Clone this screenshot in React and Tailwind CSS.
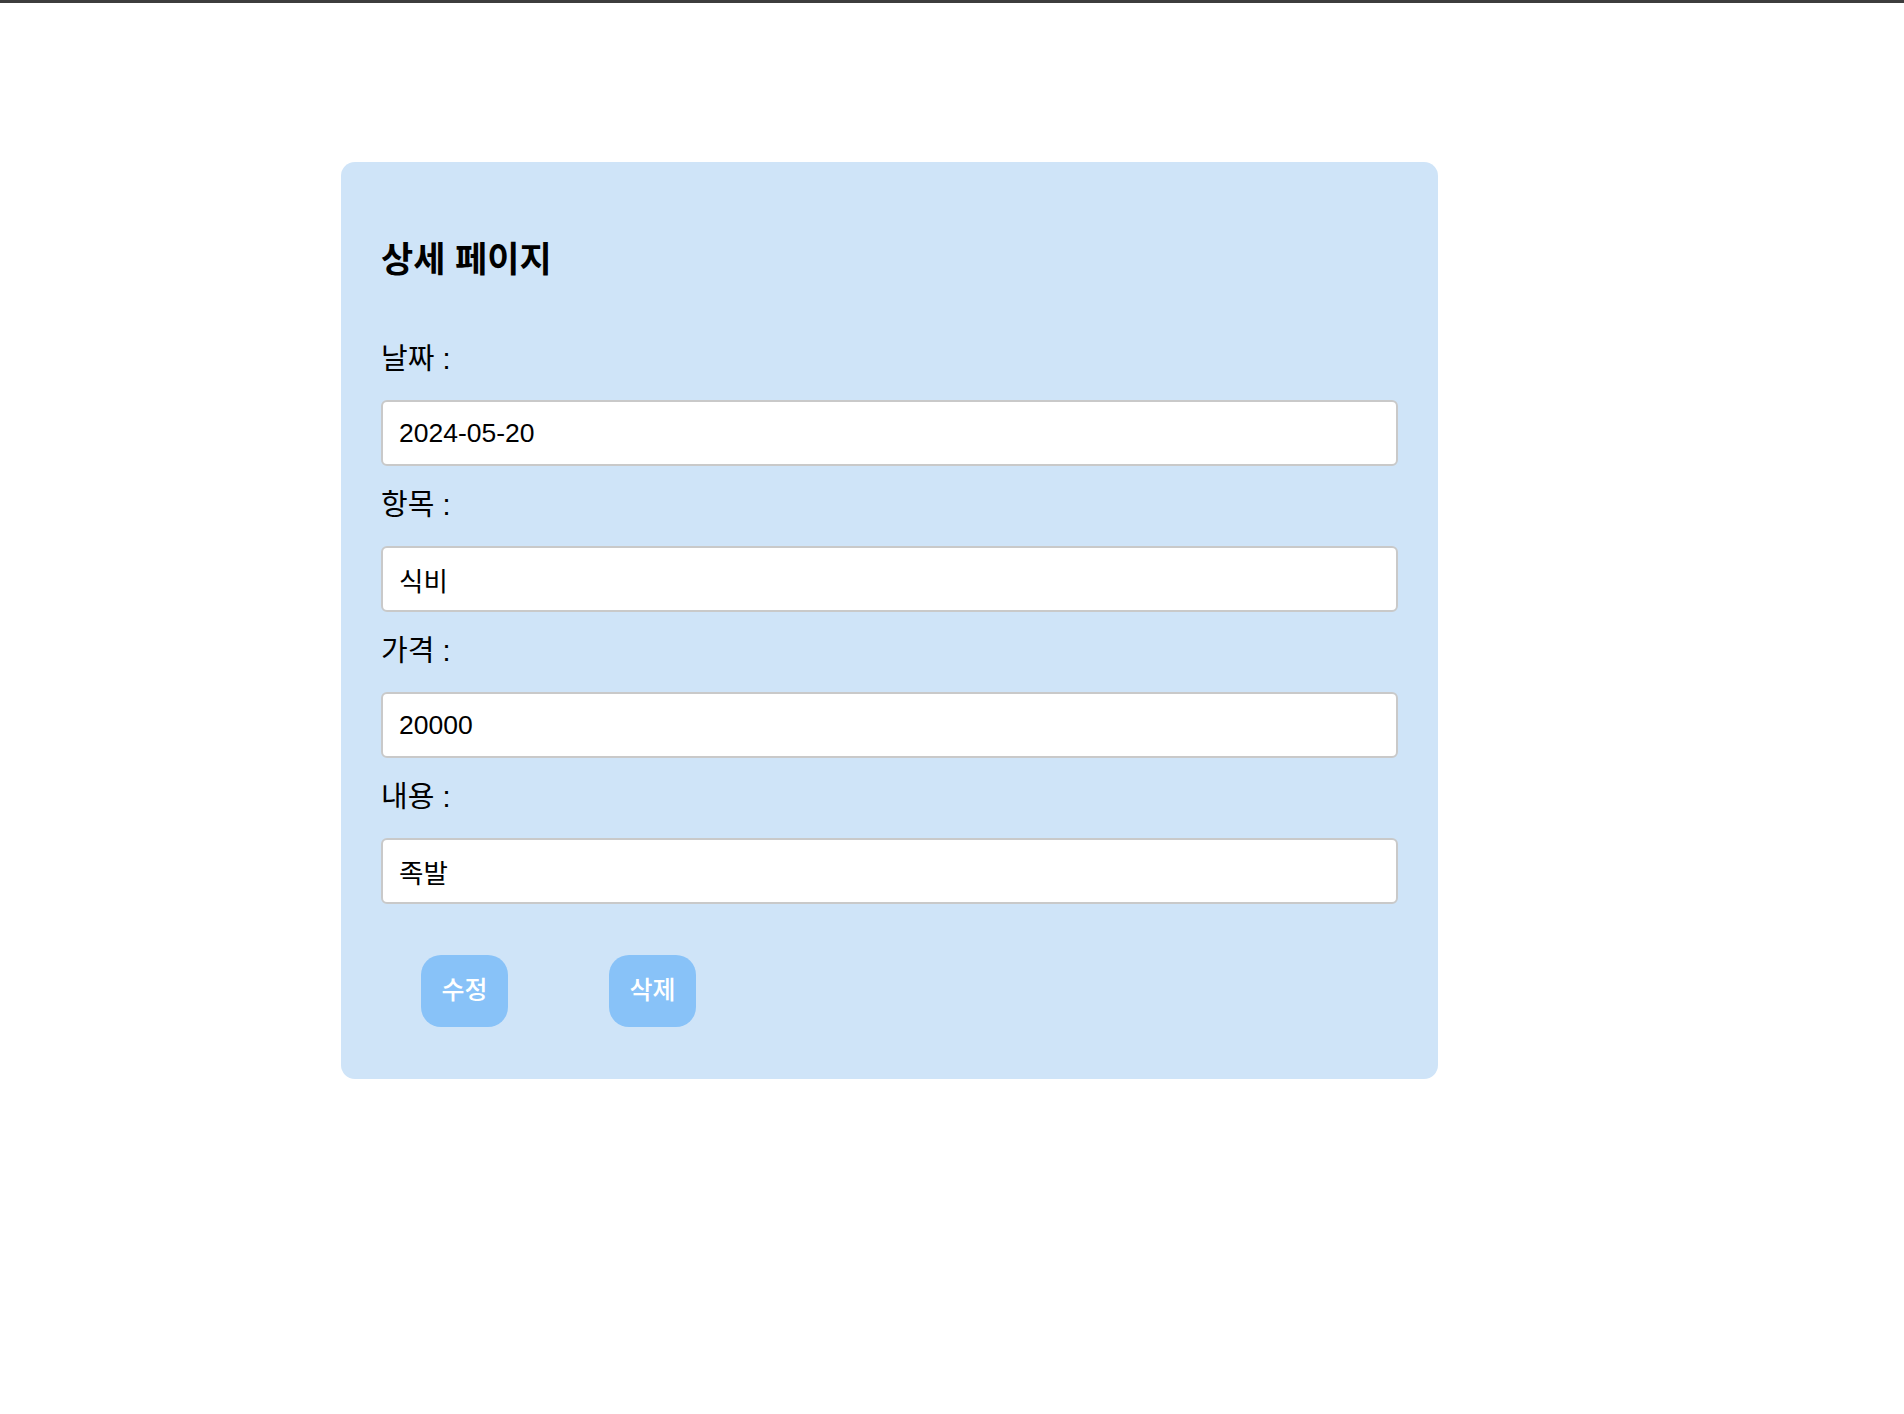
import React from "react";

const fields = [
  { label: "날짜 :", value: "2024-05-20" },
  { label: "항목 :", value: "식비" },
  { label: "가격 :", value: "20000" },
  { label: "내용 :", value: "족발" },
];

export default function App() {
  return (
    <div className="min-h-[1414px] bg-white font-['Liberation_Sans','Noto_Sans_CJK_KR',sans-serif] text-black">
      {/* top bar */}
      <div className="h-[3px] bg-[#3d3d3d]" />

      <div className="pl-[341px] pt-[159px]">
        <div className="flex w-[1097px] flex-col rounded-[14px] bg-[#cfe4f8] px-[40px] pt-[40px] pb-[52px]">
          {/* Heading */}
          <h2 className="mt-[36px] h-[44px] text-[35px] leading-[44px] font-bold">상세 페이지</h2>

          {/* Fields */}
          <div className="mt-[38px] flex flex-col">
            {fields.map((f) => (
              <div key={f.label} className="flex flex-col">
                <label className="mt-[19px] block h-[40px] text-[29px] leading-[40px]">
                  {f.label}
                </label>
                <input
                  readOnly
                  value={f.value}
                  className="mt-[21px] block h-[66px] w-full rounded-[6px] border-2 border-[#c9c9c9] bg-white px-[16px] text-[26.5px] outline-none"
                />
              </div>
            ))}
          </div>

          {/* Actions */}
          <div className="mt-[51px] flex gap-[101px] pl-[40px]">
            <button className="h-[72px] w-[87px] rounded-[20px] bg-[#88c2f8] text-[25px] font-medium text-white">
              수정
            </button>
            <button className="h-[72px] w-[87px] rounded-[20px] bg-[#88c2f8] text-[25px] font-medium text-white">
              삭제
            </button>
          </div>
        </div>
      </div>
    </div>
  );
}
